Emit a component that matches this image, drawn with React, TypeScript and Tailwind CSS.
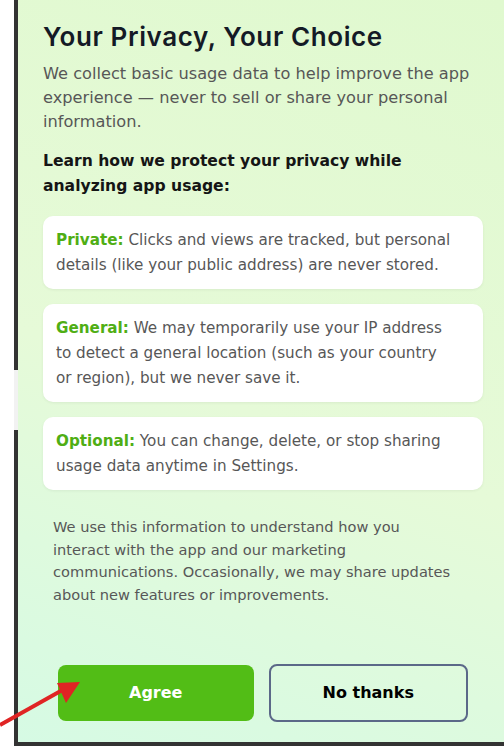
import React from 'react';

const points = [
  {
    label: 'Private:',
    text: 'Clicks and views are tracked, but personal details (like your public address) are never stored.',
  },
  {
    label: 'General:',
    text: 'We may temporarily use your IP address to\u00a0detect a general location (such as your country or\u00a0region), but we never save it.',
  },
  {
    label: 'Optional:',
    text: 'You can change, delete, or stop sharing usage data anytime in Settings.',
  },
];

function Arrow() {
  return (
    <svg className="absolute left-0 top-[676px]" width="90" height="56" viewBox="0 0 90 56">
      <line x1="0" y1="49" x2="66" y2="12" stroke="#e02424" strokeWidth="4" />
      <polygon points="80,6 57,7 66,27" fill="#e02424" />
    </svg>
  );
}

export default function App() {
  return (
    <div className="relative flex h-[746px] w-[504px] overflow-hidden bg-white font-['DejaVu_Sans',sans-serif]">
      <div className="w-[14px]" />
      <div className="flex w-[4px] flex-col">
        <div className="h-[370px] bg-[#333]" />
        <div className="h-[60px] bg-[#f2f2f2]" />
        <div className="flex-1 bg-[#333]" />
      </div>
      <div className="flex flex-1 flex-col border-b-4 border-[#333] bg-[linear-gradient(20deg,#d6fae4_0%,#e6fad8_45%,#e0f9cf_100%)] pl-[25px] pr-[3px] pt-[21px]">
        <h1 className="font-['Inter',sans-serif] text-[26px] font-semibold leading-[31px] tracking-[0.6px] text-[#141a26]">
          Your Privacy, Your Choice
        </h1>
        <p className="mt-[10px] text-[16.2px] leading-[24px] text-[#575757]">
          We collect basic usage data to help improve the app experience — never to sell or share your personal information.
        </p>
        <p className="mt-[15px] w-[440px] text-[15.6px] font-bold leading-[25px] text-[#151515]">
          Learn how we protect your privacy while analyzing app usage:
        </p>
        <div className="mt-[17px] flex w-[440px] flex-col gap-[15px]">
          {points.map((p) => (
            <div key={p.label} className="rounded-[10px] bg-white px-[13px] py-[11.5px] shadow-[0_1px_3px_rgba(0,0,0,0.06)]">
              <p className="text-[15.2px] leading-[25px] text-[#575757]">
                <span className="font-bold text-[#4fae14]">{p.label}</span> {p.text}
              </p>
            </div>
          ))}
        </div>
        <p className="ml-[10px] mt-[26px] w-[418px] text-[14.6px] leading-[22.7px] text-[#575757]">
          We use this information to understand how you
          <br />
          interact with the app and our marketing communications. Occasionally, we may share updates about new features or improvements.
        </p>
        <div className="mt-[58px] flex w-[440px] gap-[15px] px-[15px]">
          <button className="h-[56px] flex-1 rounded-[8px] bg-[#52bd16] text-[16px] font-bold text-white">Agree</button>
          <button className="-mt-[1px] h-[58px] flex-1 rounded-[8px] border-2 border-[#5b6888] text-[16px] font-bold text-black">
            No thanks
          </button>
        </div>
      </div>
      <Arrow />
    </div>
  );
}
